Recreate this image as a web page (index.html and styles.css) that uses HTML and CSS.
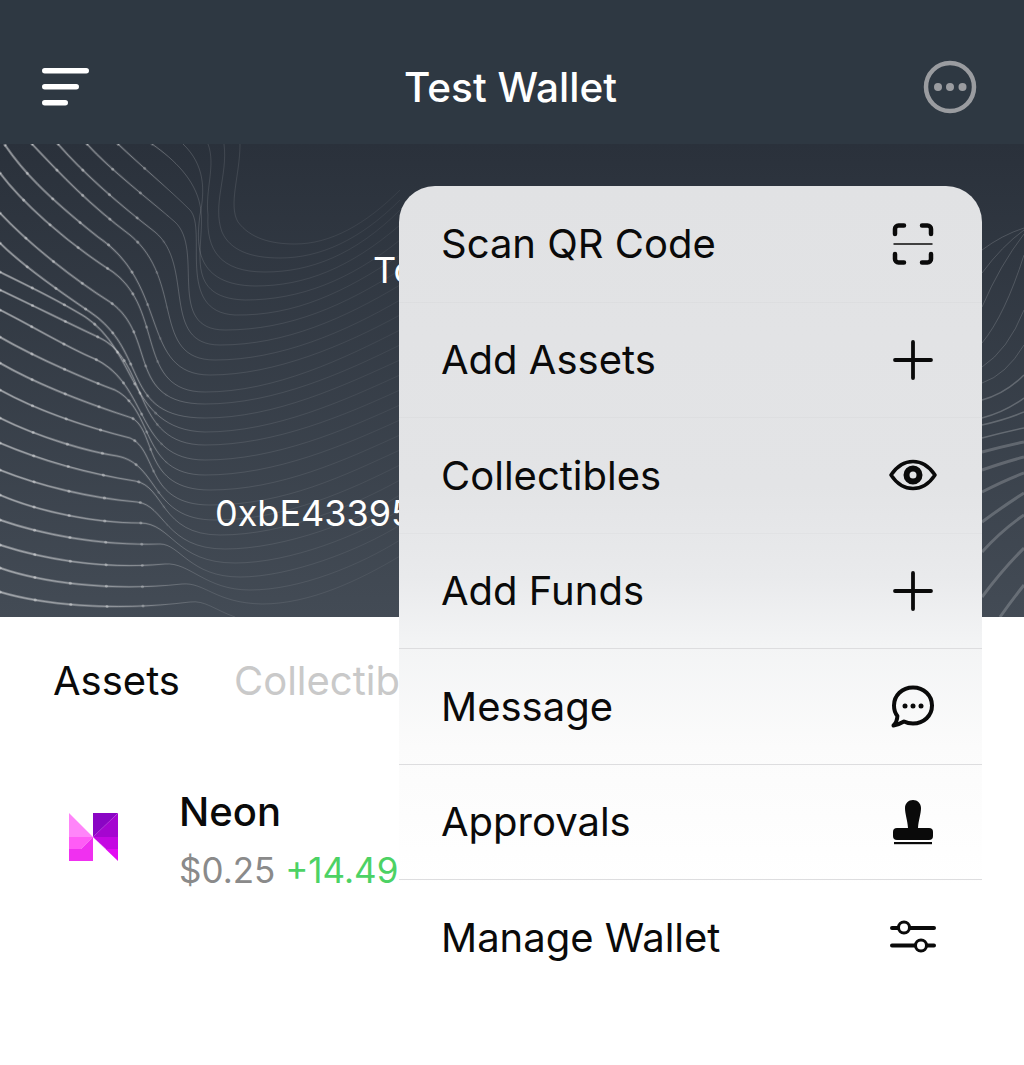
FILE: index.html
```html
<!DOCTYPE html>
<html lang="en">
<head>
    <meta charset="UTF-8">
    <meta name="viewport" content="width=device-width, initial-scale=1.0">
    <title>Test Wallet</title>
    <link rel="stylesheet" href="styles.css">
</head>
<body>

<header class="topbar">
    <svg class="icon-menu" width="48" height="38" viewBox="0 0 48 38">
        <rect x="0" y="0" width="47" height="5.5" rx="2.75"/>
        <rect x="0" y="16" width="37" height="5.5" rx="2.75"/>
        <rect x="0" y="32" width="26" height="5.5" rx="2.75"/>
    </svg>
    <h1 class="title">Test Wallet</h1>
    <svg class="icon-more" width="54" height="54" viewBox="0 0 54 54">
        <circle cx="27" cy="27" r="24" fill="none" stroke="#9a9ca0" stroke-width="4.5"/>
        <circle cx="15" cy="27" r="4" fill="#9a9ca0"/>
        <circle cx="27" cy="27" r="4" fill="#9a9ca0"/>
        <circle cx="39.500" cy="27" r="4" fill="#9a9ca0"/>
    </svg>
</header>

<section class="hero">
    <svg class="waves" width="1024" height="473" viewBox="0 144 1024 473">
        <defs>
            <linearGradient id="waveFade" gradientUnits="userSpaceOnUse" x1="0" y1="0" x2="400" y2="0">
                <stop offset="0" stop-color="#fff" stop-opacity=".3"/>
                <stop offset=".36" stop-color="#fff" stop-opacity=".3"/>
                <stop offset=".52" stop-color="#fff" stop-opacity=".11"/>
                <stop offset="1" stop-color="#fff" stop-opacity=".05"/>
            </linearGradient>
            <linearGradient id="waveThick" gradientUnits="userSpaceOnUse" x1="0" y1="0" x2="170" y2="0">
                <stop offset="0" stop-color="#fff" stop-opacity=".34"/>
                <stop offset=".6" stop-color="#fff" stop-opacity=".2"/>
                <stop offset="1" stop-color="#fff" stop-opacity="0"/>
            </linearGradient>
            <linearGradient id="waveDots" gradientUnits="userSpaceOnUse" x1="0" y1="0" x2="170" y2="0">
                <stop offset="0" stop-color="#fff" stop-opacity=".34"/>
                <stop offset=".8" stop-color="#fff" stop-opacity=".3"/>
                <stop offset="1" stop-color="#fff" stop-opacity="0"/>
            </linearGradient>
            <!-- lines coming in from the left edge -->
            <g id="leftLines">
                <path d="M0 592C40 604 110 612 190 602C205 600 215 610 235 617"/>
                <path d="M0 568C40 582 110 592 182 584C205 582 215 603 262 604C310 604 360 580 400 556"/>
                <path d="M0 545C40 558 100 570 165 564C190 562 205 590 250 590C300 590 360 565 400 540"/>
                <path d="M0 520C40 534 100 546 160 544C180 544 190 577 240 577C290 577 360 550 400 525"/>
                <path d="M0 495C40 512 95 523 140 523C172 523 175 563 235 563C290 563 360 535 400 510"/>
                <path d="M0 470C40 486 90 498 137 502C165 505 165 549 225 549C285 549 360 520 400 495"/>
                <path d="M0 443C40 460 90 474 135 481C165 486 160 535 220 535C285 535 355 505 400 480"/>
                <path d="M0 418C40 438 90 452 117 456C160 464 150 520 215 520C285 520 350 490 400 465"/>
                <path d="M0 390C40 412 90 428 130 438C158 450 145 505 210 505C285 505 345 475 400 450"/>
                <path d="M0 363C40 386 92 405 132 418C157 432 142 490 210 490C280 490 345 460 400 435"/>
                <path d="M0 337C40 360 93 382 115 390C155 410 140 475 205 475C275 475 345 445 400 420"/>
                <path d="M0 310C25 322 68 348 95 359C150 385 135 460 205 460C275 460 345 430 400 405"/>
                <path d="M0 290C30 304 72 325 98 337C150 360 130 445 205 445C275 445 345 415 400 390"/>
                <path d="M0 272C20 282 50 296 77 312C140 345 125 430 205 432C275 432 345 400 400 375"/>
                <path d="M0 243C20 263 50 285 90 312C150 352 120 418 205 418C275 418 345 385 400 360"/>
                <path d="M0 213C30 245 75 280 110 302C158 335 125 404 205 404C275 404 345 372 400 345"/>
                <path d="M0 173C20 200 63 240 113 272C165 310 135 392 205 392C275 392 345 358 400 330"/>
                <path d="M5 145C22 170 45 195 98 237C170 285 140 375 210 375C275 375 345 345 400 315"/>
                <path d="M32 144C63 177 90 205 130 235C185 280 150 360 215 360C280 360 345 332 400 300"/>
                <path d="M58 144C85 175 120 205 155 232C195 265 160 345 220 345C285 345 345 318 400 285"/>
                <path d="M87 144C110 170 150 200 175 222C205 250 165 330 225 330C290 330 345 305 400 270"/>
                <path d="M118 144C140 165 170 190 190 210C208 230 175 312 235 315C295 316 345 292 400 255"/>
                <path d="M152 144C175 160 195 180 200 205C208 240 178 298 245 300C300 300 350 280 400 240"/>
                <path d="M183 144C205 165 205 190 200 215C196 245 195 285 255 286C305 286 350 268 400 225"/>
                <path d="M208 144C216 165 205 190 208 215C206 250 220 272 265 272C310 272 355 255 400 210"/>
                <path d="M224 144C228 175 212 205 222 232C230 250 250 258 280 258C320 258 360 240 400 200"/>
                <path d="M240 144C240 175 228 205 238 222C250 238 270 244 295 244C330 244 365 225 400 190"/>
            </g>
        </defs>
        <use href="#leftLines" class="wave-base" stroke="url(#waveFade)"/>
        <use href="#leftLines" class="wave-heavy" stroke="url(#waveThick)"/>
        <use href="#leftLines" class="wave-dots" stroke="url(#waveDots)"/>
        <!-- lines visible to the right of the menu -->
        <g class="waves-right" stroke="#fff">
            <path class="wave-thin" d="M982 250Q1002 235 1024 228"/>
            <path class="wave-thin" d="M982 273Q1002 246 1024 230"/>
            <path class="wave-thin" d="M982 307Q1000 265 1024 234"/>
            <path class="wave-thin" d="M982 343Q1005 315 1024 255"/>
            <path class="wave-thin" d="M982 367Q1008 350 1024 310"/>
            <path class="wave-thin" d="M982 383Q1006 375 1024 345"/>
            <path class="wave-mid" d="M982 400Q1005 394 1024 375"/>
            <path class="wave-mid" d="M982 418Q1005 412 1024 398"/>
            <path class="wave-mid" d="M982 425Q1005 420 1024 412"/>
            <path class="wave-mid" d="M982 438Q1005 432 1024 428"/>
            <path class="wave-thick" d="M982 452Q1005 446 1024 442"/>
            <path class="wave-thick" d="M982 470Q1005 462 1024 457"/>
            <path class="wave-thick" d="M982 492Q1005 480 1024 473"/>
            <path class="wave-thick" d="M982 522Q1005 505 1024 493"/>
            <path class="wave-thick" d="M982 552Q1002 530 1024 515"/>
            <path class="wave-thick" d="M982 597Q1002 570 1024 548"/>
            <path class="wave-thick" d="M1000 617Q1012 600 1024 585"/>
        </g>
    </svg>
    <div class="hero-text">
        <p class="hero-label">To</p>
        <p class="hero-address">0xbE43395</p>
    </div>
</section>

<nav class="tabs">
    <span class="tab tab-active">Assets</span>
    <span class="tab">Collectibles</span>
</nav>

<div class="asset">
    <svg class="asset-logo" width="50" height="50" viewBox="0 0 50 50">
        <polygon points="0,1 24,25 0,25" fill="#ff85f9"/>
        <polygon points="0,25 24,25 12,37 0,37" fill="#ff5cf6"/>
        <polygon points="24,25 24,49 0,49 0,37 12,37" fill="#f030f0"/>
        <polygon points="24,1 49,1 24,25" fill="#8a05c4"/>
        <polygon points="49,1 49,25 24,25" fill="#a506d0"/>
        <polygon points="24,25 49,25 49,37 37,37 26,27" fill="#c408e2"/>
        <polygon points="26,27 37,37 49,37 49,49" fill="#e20cf2"/>
    </svg>
    <div class="asset-info">
        <div class="asset-name">Neon</div>
        <div class="asset-price">$0.25 <span class="asset-change">+14.49%</span></div>
    </div>
</div>

<div class="menu">
    <div class="menu-row">
        <span>Scan QR Code</span>
        <svg class="menu-icon" viewBox="0 0 48 48">
            <path class="ic-corner" d="M6 14V9a3.500 3.500 0 0 1 3.500-3.500H15M33 5.500h5.500A3.500 3.500 0 0 1 42 9v5M6 34v5a3.500 3.500 0 0 0 3.500 3.500H15M33 42.500h5.500A3.500 3.500 0 0 0 42 39v-5"/>
            <path class="ic-hair" d="M4.500 24h39"/>
        </svg>
    </div>
    <div class="menu-row">
        <span>Add Assets</span>
        <svg class="menu-icon" viewBox="0 0 48 48"><path class="ic-plus" d="M6 24h36M24 6v36"/></svg>
    </div>
    <div class="menu-row">
        <span>Collectibles</span>
        <svg class="menu-icon" viewBox="0 0 48 48">
            <path class="ic" d="M2 24C8 15 15 10.500 24 10.500S40 15 46 24C40 33 33 37.500 24 37.500S8 33 2 24Z"/>
            <circle cx="24" cy="24" r="6.500" fill="none" stroke="#0a0a0a" stroke-width="6"/>
        </svg>
    </div>
    <div class="menu-row">
        <span>Add Funds</span>
        <svg class="menu-icon" viewBox="0 0 48 48"><path class="ic-plus" d="M6 24h36M24 6v36"/></svg>
    </div>
    <div class="menu-row row-line">
        <span>Message</span>
        <svg class="menu-icon" viewBox="0 0 48 48">
            <path class="ic-bold" d="M24 5.500C35 5.500 43 13.500 43 23.500S35 41.500 24 41.500C20.500 41.500 17.500 40.800 15 39.500C12.500 41 9.500 42.500 4.500 43.500C7 41 8.200 38 8.400 34C6 31 5 27.500 5 23.500C5 13.500 13 5.500 24 5.500Z"/>
            <circle cx="16" cy="24" r="2.500" fill="#0a0a0a"/>
            <circle cx="24" cy="24" r="2.500" fill="#0a0a0a"/>
            <circle cx="32" cy="24" r="2.500" fill="#0a0a0a"/>
        </svg>
    </div>
    <div class="menu-row row-line">
        <span>Approvals</span>
        <svg class="menu-icon" viewBox="0 0 48 48">
            <path d="M24 2C28.500 2 32 5.500 32 10C32 16 29.500 22 29 30H19C18.500 22 16 16 16 10C16 5.500 19.500 2 24 2Z" fill="#0a0a0a"/>
            <rect x="4" y="30" width="40" height="12" rx="4" fill="#0a0a0a"/>
            <rect x="5" y="44" width="38" height="2.200" fill="#0a0a0a"/>
        </svg>
    </div>
    <div class="menu-row row-line">
        <span>Manage Wallet</span>
        <svg class="menu-icon" viewBox="0 0 48 48">
            <path class="ic-bold" d="M3 15h42M3 32.500h42"/>
            <circle cx="15" cy="14.500" r="5.500" fill="#fdfdfd" stroke="#0a0a0a" stroke-width="3"/>
            <circle cx="32" cy="32.500" r="5.500" fill="#fdfdfd" stroke="#0a0a0a" stroke-width="3"/>
        </svg>
    </div>
</div>

</body>
</html>
```

FILE: styles.css
```css
* {
    box-sizing: border-box;
}
html, body {
    height: 100%;
}
body {
    font-family: Inter, "Liberation Sans", sans-serif;
    margin: 0;
    height: 1065px;
    background-color: #ffffff;
    color: #0a0a0a;
    overflow: hidden;
    position: relative;
}
.topbar {
    height: 144px;
    padding: 30px 47px 0 42px;
    display: flex;
    align-items: center;
    justify-content: space-between;
    background-color: #2e3842;
}
.icon-menu {
    fill: #ffffff;
}
.title {
    margin: 0 0 0 8px;
    font-size: 40.5px;
    font-weight: 500;
    color: #ffffff;
}
.hero {
    height: 473px;
    position: relative;
    color: #ffffff;
    background: linear-gradient(#2a313b, #434b55);
}
.waves {
    position: absolute;
    top: 0;
    left: 0;
    fill: none;
}
.wave-base {
    stroke-width: 1;
}
.wave-heavy {
    stroke-width: 2.4;
}
.wave-dots {
    stroke-width: 3;
    stroke-linecap: round;
    stroke-dasharray: 0.1 36;
}
.wave-thin {
    stroke-width: .8;
    stroke-opacity: .2;
}
.wave-mid {
    stroke-width: 1.5;
    stroke-opacity: .22;
}
.wave-thick {
    stroke-width: 3;
    stroke-opacity: .2;
}
.hero-text {
    height: 100%;
    padding-top: 106px;
    position: relative;
    display: flex;
    flex-direction: column;
    gap: 203px;
}
.hero-label, .hero-address {
    margin: 0;
    font-size: 36px;
    line-height: 40px;
    white-space: nowrap;
}
.hero-label {
    padding-left: 373px;
}
.hero-address {
    padding-left: 215px;
}
.tabs {
    display: flex;
    gap: 54px;
    padding: 41px 0 0 53px;
}
.tab {
    font-size: 40px;
    line-height: 46px;
    color: #c9c9c9;
}
.tab-active {
    color: #0a0a0a;
}
.asset {
    display: flex;
    gap: 60px;
    padding: 85px 0 0 69px;
}
.asset-logo {
    margin-top: 23px;
    filter: blur(0.6px);
}
.asset-name {
    font-size: 40px;
    font-weight: 500;
    line-height: 46px;
}
.asset-price {
    margin-top: 15px;
    font-size: 35px;
    line-height: 40px;
    color: #8a8a8a;
}
.asset-change {
    color: #4cd264;
}
.menu {
    position: absolute;
    top: 186px;
    left: 399px;
    width: 583px;
    border-radius: 36px 36px 0 0;
    background: linear-gradient(#e1e2e4 0, #e3e4e6 300px, #e9eaec 390px, #f3f4f5 460px, #fbfbfb 560px, #ffffff 700px);
}
.menu-row {
    height: 115.5px;
    padding: 0 45px 0 42px;
    display: flex;
    align-items: center;
    justify-content: space-between;
    font-size: 40px;
    border-top: 1px solid rgba(0, 0, 0, 0.02);
}
.menu-row:first-child {
    border-top: none;
}
.row-line {
    border-top-color: #dddddf;
}
.menu-icon {
    width: 48px;
    height: 48px;
}
.ic, .ic-bold, .ic-corner, .ic-plus, .ic-hair {
    fill: none;
    stroke: #0a0a0a;
    stroke-linecap: round;
    stroke-linejoin: round;
}
.ic {
    stroke-width: 3.5;
}
.ic-bold {
    stroke-width: 4;
}
.ic-corner {
    stroke-width: 4.5;
}
.ic-plus {
    stroke-width: 3.8;
}
.ic-hair {
    stroke-width: 1.6;
    stroke-linecap: butt;
}
```
